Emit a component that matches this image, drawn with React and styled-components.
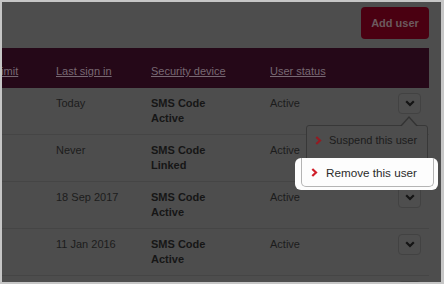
import React from 'react'
import styled, { createGlobalStyle } from 'styled-components'

const Global = createGlobalStyle`
  html, body { margin: 0; padding: 0; background: #c6c6c6; }
  body { font-family: "Liberation Sans", Arial, sans-serif; }
`

const Frame = styled.div`
  width: 444px;
  height: 284px;
  box-sizing: border-box;
  border: 2px solid #c6c6c6;
  border-right-width: 3px;
  background: #4d4d4d;
  overflow: hidden;
`
const Page = styled.div`
  padding-right: 12px;
  font-size: 11px;
  line-height: 15px;
  color: #1a1a1a;
`
const TopBar = styled.div`
  height: 46px;
  display: flex;
  justify-content: flex-end;
  align-items: flex-start;
`
const AddButton = styled.button`
  margin-top: 5px;
  height: 32px;
  width: 68px;
  border: none;
  border-radius: 4px;
  background: #4a0011;
  color: #6c5a5e;
  font: bold 11px "Liberation Sans", Arial, sans-serif;
`
const Table = styled.div`
  margin-left: -7px;
`
const cols = `61px 95px 119px 1fr 32px`

const HeadRow = styled.div`
  display: grid;
  grid-template-columns: ${cols};
  height: 40px;
  box-sizing: border-box;
  padding: 16px 0 9px;
  background: #250818;
`
const HeadCell = styled.span`
  color: #786873;
  text-decoration: underline;
  white-space: nowrap;
`
const Row = styled.div`
  display: grid;
  grid-template-columns: ${cols};
  height: 47px;
  box-sizing: border-box;
  padding: 8px 0;
  border-bottom: 1px solid #454545;
`
const Cell = styled.div`
  font-weight: ${p => (p.$bold ? 'bold' : 'normal')};
  color: ${p => (p.$bold ? '#161616' : '#1c1c1c')};
  white-space: nowrap;
`
const ActionCell = styled.div`
  position: relative;
`
const ToggleButton = styled.button`
  margin: -3px 0 0 1px;
  width: 23px;
  height: 21px;
  padding: 0;
  display: flex;
  align-items: center;
  justify-content: center;
  background: #4e4e4e;
  border: 1px solid #424242;
  border-radius: 4px;
`
const Popover = styled.div`
  position: absolute;
  z-index: 5;
  top: 29px;
  left: -91px;
  width: 122px;
  height: 62px;
  box-sizing: border-box;
  background: #4d4d4d;
  border: 1px solid #383838;
  border-radius: 3px;

  &::before, &::after {
    content: '';
    position: absolute;
    width: 0;
    height: 0;
  }
  &::before {
    top: -10px;
    left: 93px;
    border-left: 9px solid transparent;
    border-right: 9px solid transparent;
    border-bottom: 10px solid #333;
  }
  &::after {
    top: -8px;
    left: 94px;
    border-left: 8px solid transparent;
    border-right: 8px solid transparent;
    border-bottom: 9px solid #4d4d4d;
  }
`
const MenuItem = styled.div`
  height: 29px;
  display: flex;
  align-items: center;
  gap: 7px;
  padding-left: 8px;
  color: #1c1c1c;
  font-size: 11px;
  white-space: nowrap;
`
const Spotlight = styled.div`
  position: relative;
  margin: 3px -11px 0 -12px;
  height: 32px;
  box-sizing: border-box;
  padding: 0 4px 3px 6px;
  background: #fdfdfd;
  border-radius: 6px;
`
const SpotItem = styled.div`
  height: 29px;
  box-sizing: border-box;
  display: flex;
  align-items: center;
  gap: 8px;
  padding-left: 9px;
  border: 1px solid #b4b4b4;
  border-top: none;
  border-radius: 0 0 5px 5px;
  color: #2b2b2b;
  font-size: 11.7px;
  white-space: nowrap;
`

const ChevronDown = () => (
  <svg width="10" height="7" viewBox="0 0 10 7">
    <polyline points="1.2,1.2 5,5 8.8,1.2" fill="none" stroke="#141414" strokeWidth="2.2" />
  </svg>
)

const ChevronRight = ({ color }) => (
  <svg width="7" height="9" viewBox="0 0 7 9">
    <polyline points="1.3,1 5,4.5 1.3,8" fill="none" stroke={color} strokeWidth="2.2" />
  </svg>
)

const users = [
  { last: 'Today', device: 'Active', status: 'Active', open: true },
  { last: 'Never', device: 'Linked', status: 'Active' },
  { last: '18 Sep 2017', device: 'Active', status: 'Active' },
  { last: '11 Jan 2016', device: 'Active', status: 'Active' },
  { last: '', device: '', status: '' },
]

const App = () => (
  <Frame>
    <Global />
    <Page>
      <TopBar>
        <AddButton>Add user</AddButton>
      </TopBar>
      <Table>
        <HeadRow>
          <HeadCell>Limit</HeadCell>
          <HeadCell>Last sign in</HeadCell>
          <HeadCell>Security device</HeadCell>
          <HeadCell>User status</HeadCell>
          <span />
        </HeadRow>
        {users.map((u, i) => (
          <Row key={i}>
            <Cell />
            <Cell>{u.last}</Cell>
            <Cell $bold>
              {u.device && (
                <>
                  SMS Code
                  <br />
                  {u.device}
                </>
              )}
            </Cell>
            <Cell>{u.status}</Cell>
            <ActionCell>
              <ToggleButton>
                <ChevronDown />
              </ToggleButton>
              {u.open && (
                <Popover>
                  <MenuItem>
                    <ChevronRight color="#941b22" />
                    Suspend this user
                  </MenuItem>
                  <Spotlight>
                    <SpotItem>
                      <ChevronRight color="#d01f2a" />
                      Remove this user
                    </SpotItem>
                  </Spotlight>
                </Popover>
              )}
            </ActionCell>
          </Row>
        ))}
      </Table>
    </Page>
  </Frame>
)

export default App
